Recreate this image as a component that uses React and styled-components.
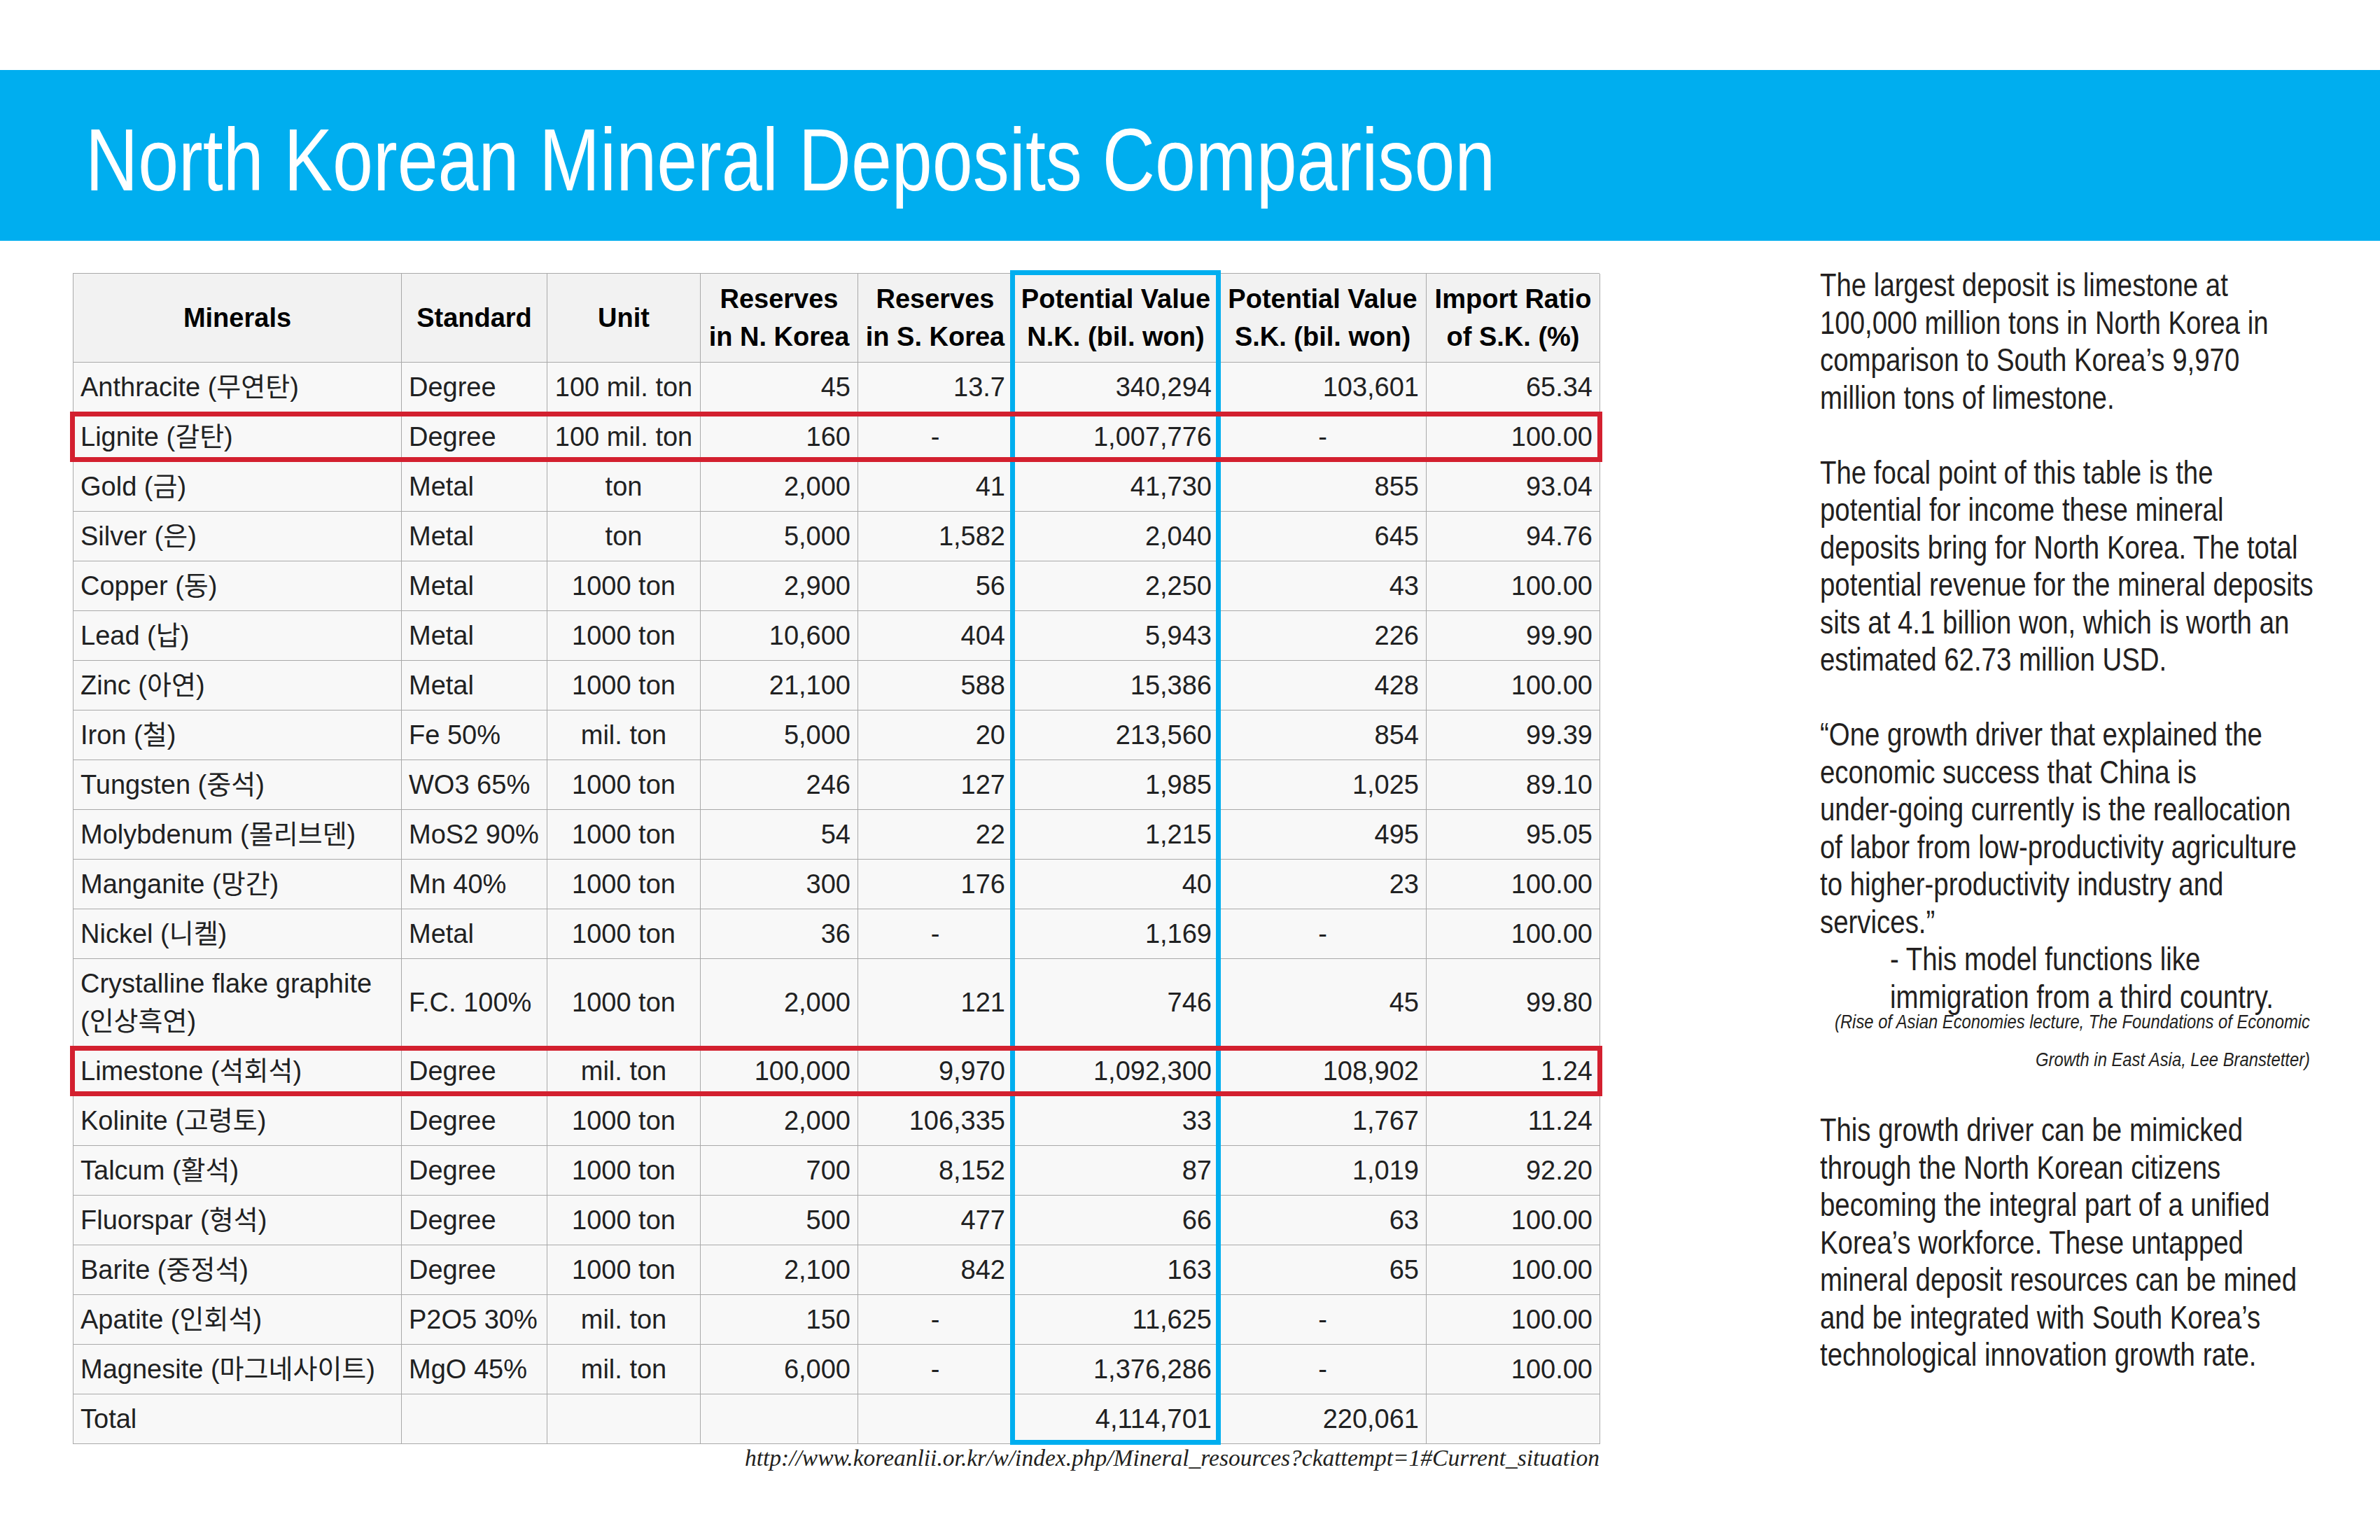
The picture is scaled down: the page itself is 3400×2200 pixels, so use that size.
import React from 'react'
import styled, { createGlobalStyle } from 'styled-components'

const GlobalStyle = createGlobalStyle`
  html, body {
    margin: 0;
    padding: 0;
    background: #fff;
  }
  body {
    width: 3400px;
    height: 2200px;
    overflow: hidden;
    font-family: "Liberation Sans", Arial, sans-serif;
  }
`

const COLS = '469px 208px 219px 225px 221px 295px 296px 248px'

// the print uses a condensed grotesque; no narrow face is installed, so squeeze Liberation Sans
const TITLE_NARROW = 0.82
const TEXT_NARROW = 0.835

const header = [
  'Minerals',
  'Standard',
  'Unit',
  ['Reserves', 'in N. Korea'],
  ['Reserves', 'in S. Korea'],
  ['Potential Value', 'N.K. (bil. won)'],
  ['Potential Value', 'S.K. (bil. won)'],
  ['Import Ratio', 'of S.K. (%)'],
]

const rows = [
  ['Anthracite (무연탄)', 'Degree', '100 mil. ton', '45', '13.7', '340,294', '103,601', '65.34'],
  ['Lignite (갈탄)', 'Degree', '100 mil. ton', '160', '-', '1,007,776', '-', '100.00', true],
  ['Gold (금)', 'Metal', 'ton', '2,000', '41', '41,730', '855', '93.04'],
  ['Silver (은)', 'Metal', 'ton', '5,000', '1,582', '2,040', '645', '94.76'],
  ['Copper (동)', 'Metal', '1000 ton', '2,900', '56', '2,250', '43', '100.00'],
  ['Lead (납)', 'Metal', '1000 ton', '10,600', '404', '5,943', '226', '99.90'],
  ['Zinc (아연)', 'Metal', '1000 ton', '21,100', '588', '15,386', '428', '100.00'],
  ['Iron (철)', 'Fe 50%', 'mil. ton', '5,000', '20', '213,560', '854', '99.39'],
  ['Tungsten (중석)', 'WO3 65%', '1000 ton', '246', '127', '1,985', '1,025', '89.10'],
  ['Molybdenum (몰리브덴)', 'MoS2 90%', '1000 ton', '54', '22', '1,215', '495', '95.05'],
  ['Manganite (망간)', 'Mn 40%', '1000 ton', '300', '176', '40', '23', '100.00'],
  ['Nickel (니켈)', 'Metal', '1000 ton', '36', '-', '1,169', '-', '100.00'],
  [['Crystalline flake graphite', '(인상흑연)'], 'F.C. 100%', '1000 ton', '2,000', '121', '746', '45', '99.80'],
  ['Limestone (석회석)', 'Degree', 'mil. ton', '100,000', '9,970', '1,092,300', '108,902', '1.24', true],
  ['Kolinite (고령토)', 'Degree', '1000 ton', '2,000', '106,335', '33', '1,767', '11.24'],
  ['Talcum (활석)', 'Degree', '1000 ton', '700', '8,152', '87', '1,019', '92.20'],
  ['Fluorspar (형석)', 'Degree', '1000 ton', '500', '477', '66', '63', '100.00'],
  ['Barite (중정석)', 'Degree', '1000 ton', '2,100', '842', '163', '65', '100.00'],
  ['Apatite (인회석)', 'P2O5 30%', 'mil. ton', '150', '-', '11,625', '-', '100.00'],
  ['Magnesite (마그네사이트)', 'MgO 45%', 'mil. ton', '6,000', '-', '1,376,286', '-', '100.00'],
  ['Total', '', '', '', '', '4,114,701', '220,061', ''],
]

// alignment of each body column
const align = ['left', 'left', 'center', 'right', 'right', 'right', 'right', 'right']

const notes = {
  first: [
    'The largest deposit is limestone at',
    '100,000 million tons in North Korea in',
    'comparison to South Korea’s 9,970',
    'million tons of limestone.',
  ],
  second: [
    'The focal point of this table is the',
    'potential for income these mineral',
    'deposits bring for North Korea. The total',
    'potential revenue for the mineral deposits',
    'sits at 4.1 billion won, which is worth an',
    'estimated 62.73 million USD.',
  ],
  quote: [
    '“One growth driver that explained the',
    'economic success that China is',
    'under-going currently is the reallocation',
    'of labor from low-productivity agriculture',
    'to higher-productivity industry and',
    'services.”',
  ],
  aside: ['- This model functions like', 'immigration from a third country.'],
  cite: [
    '(Rise of Asian Economies lecture, The Foundations of Economic',
    'Growth in East Asia, Lee Branstetter)',
  ],
  last: [
    'This growth driver can be mimicked',
    'through the North Korean citizens',
    'becoming the integral part of a unified',
    'Korea’s workforce. These untapped',
    'mineral deposit resources can be mined',
    'and be integrated with South Korea’s',
    'technological innovation growth rate.',
  ],
}

function Lines({ lines }) {
  return lines.map((l, i) => (
    <React.Fragment key={i}>
      {l}
      {i < lines.length - 1 && <br />}
    </React.Fragment>
  ))
}

export default function App() {
  return (
    <Page>
      <GlobalStyle />
      <Banner>
        <Title>North Korean Mineral Deposits Comparison</Title>
      </Banner>

      <Content>
        <TableBlock>
          <TableFrame>
            <Row $head>
              {header.map((h, i) => (
                <HeadCell key={i}>{Array.isArray(h) ? <Lines lines={h} /> : h}</HeadCell>
              ))}
            </Row>
            {rows.map((r, ri) => (
              <Row key={ri} $highlight={r[8] === true}>
                {r.slice(0, 8).map((c, ci) => (
                  <Cell key={ci} $align={c === '-' ? 'center' : align[ci]}>
                    {Array.isArray(c) ? <span><Lines lines={c} /></span> : c}
                  </Cell>
                ))}
              </Row>
            ))}
            <ColumnMark />
          </TableFrame>
          <Source>http://www.koreanlii.or.kr/w/index.php/Mineral_resources?ckattempt=1#Current_situation</Source>
        </TableBlock>

        <Notes>
          <Para><Lines lines={notes.first} /></Para>
          <Para><Lines lines={notes.second} /></Para>
          <Para $tight><Lines lines={notes.quote} /></Para>
          <Para $indent $tight><Lines lines={notes.aside} /></Para>
          <Cite><Lines lines={notes.cite} /></Cite>
          <Para><Lines lines={notes.last} /></Para>
        </Notes>
      </Content>
    </Page>
  )
}

const Page = styled.div`
  width: 3400px;
  height: 2200px;
  padding-top: 100px;
  box-sizing: border-box;
  background: #fff;
`

const Banner = styled.header`
  height: 244px;
  box-sizing: border-box;
  background: #00aeef;
  padding: 64px 0 0 122px;
`

const Title = styled.h1`
  display: inline-block;
  margin: 0;
  font-family: "Liberation Sans", sans-serif;
  font-weight: 400;
  font-size: 127px;
  line-height: 128px;
  color: #fff;
  white-space: nowrap;
  transform: scaleX(${TITLE_NARROW});
  transform-origin: left top;
`

const Content = styled.main`
  display: flex;
  align-items: flex-start;
  padding-left: 104px;
`

const TableBlock = styled.section`
  width: 2181px;
  flex: none;
  margin-top: 46px;
`

const TableFrame = styled.div`
  position: relative;
  border-top: 1px solid #a9a9a9;
  border-left: 1px solid #a9a9a9;
  color: #202122;
  font-family: "Liberation Sans", "Noto Sans CJK KR", sans-serif;
  font-size: 38px;
  line-height: 54px;
`

const Row = styled.div`
  position: relative;
  display: grid;
  grid-template-columns: ${COLS};
  background: ${p => (p.$head ? '#f2f2f2' : '#f8f8f8')};

  ${p =>
    p.$highlight &&
    `
    &::after {
      content: '';
      position: absolute;
      left: -5px;
      right: -4px;
      top: -1px;
      bottom: 0;
      border: 7px solid #d3202f;
      z-index: 3;
      pointer-events: none;
    }
  `}
`

const Cell = styled.div`
  display: flex;
  align-items: center;
  justify-content: ${p =>
    p.$align === 'right' ? 'flex-end' : p.$align === 'center' ? 'center' : 'flex-start'};
  text-align: ${p => p.$align};
  padding: 8px 10px;
  min-height: 54px;
  border-right: 1px solid #a9a9a9;
  border-bottom: 1px solid #a9a9a9;
  white-space: nowrap;
`

const HeadCell = styled(Cell)`
  justify-content: center;
  text-align: center;
  font-weight: 700;
  color: #000;
  padding: 9px 4px;
`

const ColumnMark = styled.div`
  position: absolute;
  left: 1338px;
  width: 301px;
  top: -5px;
  bottom: -1px;
  box-sizing: border-box;
  border: 7px solid #00aeef;
  z-index: 2;
  pointer-events: none;
`

const Source = styled.p`
  margin: 2px 0 0;
  text-align: right;
  font-family: "Liberation Serif", "Times New Roman", serif;
  font-style: italic;
  font-size: 33.5px;
  line-height: 36px;
  color: #231f20;
  white-space: nowrap;
`

const Notes = styled.aside`
  flex: none;
  width: ${700 / TEXT_NARROW}px;
  margin: 37px 0 0 315px;
  color: #231f20;
  font-family: "Liberation Sans", sans-serif;
  font-size: 46px;
  line-height: 53.5px;
  transform: scaleX(${TEXT_NARROW});
  transform-origin: left top;
`

const Para = styled.p`
  margin: 0 0 ${p => (p.$tight ? '0' : '53.5px')};
  padding-left: ${p => (p.$indent ? `${100 / TEXT_NARROW}px` : '0')};
  white-space: nowrap;
`

const Cite = styled.p`
  margin: -19px 0 48px;
  text-align: right;
  font-style: italic;
  font-size: 28.5px;
  line-height: 54px;
  white-space: nowrap;
`
